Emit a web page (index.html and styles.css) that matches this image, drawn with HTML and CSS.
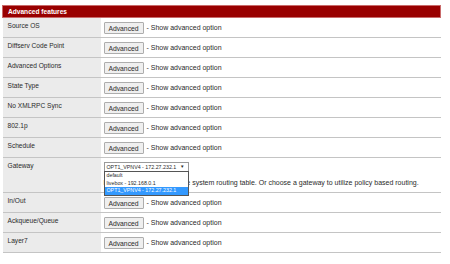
FILE: index.html
```html
<!DOCTYPE html>
<html lang="en">
<head>
  <meta charset="UTF-8" />
  <title>Firewall: Rules: Edit</title>
  <link rel="stylesheet" href="styles.css">
</head>
<body>
  <table class="tabcont">
    <tr>
      <td colspan="2" class="listtopic">Advanced features</td>
    </tr>
    <tr>
      <td class="vncell">Source OS</td>
      <td class="vtable"><button class="btn">Advanced</button> - Show advanced option</td>
    </tr>
    <tr>
      <td class="vncell">Diffserv Code Point</td>
      <td class="vtable"><button class="btn">Advanced</button> - Show advanced option</td>
    </tr>
    <tr>
      <td class="vncell">Advanced Options</td>
      <td class="vtable"><button class="btn">Advanced</button> - Show advanced option</td>
    </tr>
    <tr>
      <td class="vncell">State Type</td>
      <td class="vtable"><button class="btn">Advanced</button> - Show advanced option</td>
    </tr>
    <tr>
      <td class="vncell">No XMLRPC Sync</td>
      <td class="vtable"><button class="btn">Advanced</button> - Show advanced option</td>
    </tr>
    <tr>
      <td class="vncell">802.1p</td>
      <td class="vtable"><button class="btn">Advanced</button> - Show advanced option</td>
    </tr>
    <tr>
      <td class="vncell">Schedule</td>
      <td class="vtable"><button class="btn">Advanced</button> - Show advanced option</td>
    </tr>
    <tr>
      <td class="vncell">Gateway</td>
      <td class="vtable gateway">
        <div class="select-wrap">
          <div class="select">
            <span>OPT1_VPNV4 - 172.27.232.1</span>
            <span class="arrow">&#9660;</span>
          </div>
          <ul class="select-list">
            <li>default</li>
            <li>livebox - 192.168.0.1</li>
            <li class="selected">OPT1_VPNV4 - 172.27.232.1</li>
          </ul>
        </div>
        <p class="hint">Leave as 'default' to use the system routing table. Or choose a gateway to utilize policy based routing.</p>
      </td>
    </tr>
    <tr>
      <td class="vncell">In/Out</td>
      <td class="vtable"><button class="btn">Advanced</button> - Show advanced option</td>
    </tr>
    <tr>
      <td class="vncell">Ackqueue/Queue</td>
      <td class="vtable"><button class="btn">Advanced</button> - Show advanced option</td>
    </tr>
    <tr>
      <td class="vncell">Layer7</td>
      <td class="vtable"><button class="btn">Advanced</button> - Show advanced option</td>
    </tr>
  </table>
</body>
</html>
```

FILE: styles.css
```css
/* Base */
body {
  margin: 0;
  padding: 5px 0 0 2px;
  background: #fff;
  font-family: "Liberation Sans", Arial, sans-serif;
  font-size: 6.6px;
  color: #2a2a2a;
}

/* Table */
.tabcont {
  width: 439px;
  border-collapse: collapse;
  border-spacing: 0;
}
.listtopic {
  height: 12px;
  padding: 0 0 0 5px;
  background: #990000;
  color: #fff;
  font-weight: bold;
  border: 1px solid #c96a6a;
  box-sizing: border-box;
}
.vncell {
  width: 98px;
  box-sizing: border-box;
  padding: 4px 0 0 5px;
  height: 20px;
  vertical-align: top;
  line-height: 8px;
  background: #ebebeb;
  border-bottom: 1px solid #c4c4c4;
}
.vtable {
  padding: 4px 0 3px 3px;
  vertical-align: top;
  font-size: 7px;
  line-height: 12px;
  border-bottom: 1px solid #c4c4c4;
}

/* Buttons */
.btn {
  height: 12px;
  width: 40px;
  padding: 0;
  margin: 0 1px 0 0;
  vertical-align: top;
  font-family: inherit;
  font-size: 6.8px;
  color: #2a2a2a;
  background: #efefef;
  border: 1px solid #adadad;
  border-radius: 1px;
}

/* Gateway select */
.gateway {
  padding-bottom: 5px;
}
.select-wrap {
  position: relative;
  width: 85px;
}
.select {
  height: 8px;
  display: flex;
  justify-content: space-between;
  align-items: center;
  padding: 0 3px 0 2px;
  border: 1px solid #9a9a9a;
  font-size: 5.3px;
  line-height: 8px;
  background: #fff;
}
.arrow {
  font-size: 4.5px;
}
.select-list {
  position: absolute;
  top: 9px;
  left: 0;
  width: 85px;
  box-sizing: border-box;
  margin: 0;
  padding: 0;
  list-style: none;
  background: #fff;
  border: 1px solid #555;
  font-size: 5.3px;
  line-height: 7.5px;
}
.select-list li {
  padding-left: 2px;
}
.select-list .selected {
  background: #3399ff;
  color: #fff;
}
.hint {
  margin: 6px 0 0;
  line-height: 9px;
}
```
